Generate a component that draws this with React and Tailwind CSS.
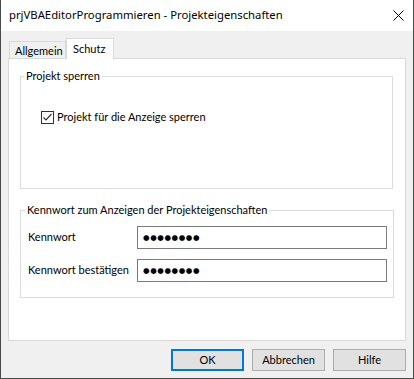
import React from "react";

const titleFont = { fontFamily: '"Noto Sans", "Liberation Sans", sans-serif' };
const bodyFont = { fontFamily: 'Lato, "Noto Sans", sans-serif' };

const PasswordField = ({ label }) => (
  <div className="flex items-center h-[23px]">
    <div className="w-[109px] text-[11px] text-black whitespace-nowrap">{label}</div>
    <div className="w-[250px] h-[23px] border border-[#7a7a7a] bg-white flex items-center pl-[5px]">
      <span className="text-[7.5px] tracking-[0.6px] text-black leading-none" style={{ fontFamily: '"DejaVu Sans", sans-serif' }}>
        ●●●●●●●●
      </span>
    </div>
  </div>
);

const Button = ({ children, primary }) => (
  <button
    className={
      "w-[73px] h-[22px] bg-[#e1e1e1] text-[11px] text-black flex items-center justify-center " +
      (primary ? "border-2 border-[#0078d7]" : "border border-[#adadad]")
    }
  >
    {children}
  </button>
);

export default function App() {
  return (
    <div className="w-[414px] h-[379px] flex flex-col border-x border-b border-[#4a4a4a] bg-[#f0f0f0] text-black" style={bodyFont}>
      {/* title bar */}
      <div className="h-[31px] bg-white flex items-center justify-between pl-[8px] pr-[9px] shrink-0">
        <span className="text-[11.3px]" style={titleFont}>prjVBAEditorProgrammieren - Projekteigenschaften</span>
        <svg width="11" height="11" viewBox="0 0 11 11">
          <path d="M0.5 0.5 L10.5 10.5 M10.5 0.5 L0.5 10.5" stroke="#000" strokeWidth="1" />
        </svg>
      </div>

      <div className="flex-1 flex flex-col px-[7px] py-[7px]">
        {/* tabs */}
        <div className="flex items-end h-[20px] pl-[1px]">
          <div className="h-[17px] w-[57px] border border-b-0 border-[#d9d9d9] bg-[#f0f0f0] text-[11px] leading-none flex items-center pl-[5px] pt-[1px] whitespace-nowrap">
            Allgemein
          </div>
          <div className="h-[21px] w-[48px] border border-b-0 border-[#d9d9d9] bg-white text-[11px] leading-none flex items-center pl-[6px] pb-[2px] -mb-[1px] relative z-10">
            Schutz
          </div>
        </div>

        {/* panel */}
        <div className="w-[398px] h-[283px] border border-[#d9d9d9] bg-white flex flex-col px-[11px] pt-[9px]">
          <fieldset className="w-[373px] h-[121px] border border-[#dcdcdc] p-0">
            <legend className="text-[11px] px-[2px] ml-[3px] leading-[16px]">Projekt sperren</legend>
            <div className="flex items-center mt-[25px] ml-[20px]">
              <div className="w-[13px] h-[13px] border border-[#333333] bg-white flex items-center justify-center">
                <svg width="11" height="11" viewBox="0 0 11 11">
                  <path d="M1.5 5.5 L4 8 L9.5 2" stroke="#333333" strokeWidth="1.2" fill="none" />
                </svg>
              </div>
              <span className="text-[11px] ml-[3px]">Projekt für die Anzeige sperren</span>
            </div>
          </fieldset>

          <fieldset className="w-[374px] h-[96px] border border-[#dcdcdc] p-0 mt-[13px]">
            <legend className="text-[11px] px-[2px] ml-[4px] leading-[16px]">
              Kennwort zum Anzeigen der Projekteigenschaften
            </legend>
            <div className="flex flex-col gap-[10px] mt-[8px] ml-[7px]">
              <PasswordField label="Kennwort" />
              <PasswordField label="Kennwort bestätigen" />
            </div>
          </fieldset>
        </div>

        {/* buttons */}
        <div className="flex justify-end gap-[8px] mt-[8px]">
          <Button primary>OK</Button>
          <Button>Abbrechen</Button>
          <Button>Hilfe</Button>
        </div>
      </div>
    </div>
  );
}
